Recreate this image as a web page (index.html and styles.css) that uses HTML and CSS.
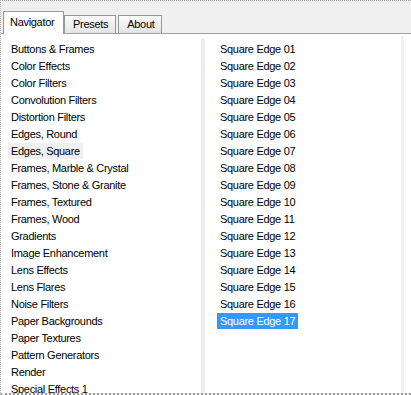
FILE: index.html
```html
<!DOCTYPE html>
<html lang="en">
  <head>
    <meta charset="UTF-8" />
    <title>Navigator</title>
    <link rel="stylesheet" href="styles.css">
  </head>
  <body>
    <div class="window">
      <div class="tabbar">
        <div class="tab active">Navigator</div>
        <div class="tab">Presets</div>
        <div class="tab">About</div>
      </div>
      <div class="panel">
        <ul class="list categories">
          <li>Buttons &amp; Frames</li>
          <li>Color Effects</li>
          <li>Color Filters</li>
          <li>Convolution Filters</li>
          <li>Distortion Filters</li>
          <li>Edges, Round</li>
          <li class="current">Edges, Square</li>
          <li>Frames, Marble &amp; Crystal</li>
          <li>Frames, Stone &amp; Granite</li>
          <li>Frames, Textured</li>
          <li>Frames, Wood</li>
          <li>Gradients</li>
          <li>Image Enhancement</li>
          <li>Lens Effects</li>
          <li>Lens Flares</li>
          <li>Noise Filters</li>
          <li>Paper Backgrounds</li>
          <li>Paper Textures</li>
          <li>Pattern Generators</li>
          <li>Render</li>
          <li>Special Effects 1</li>
        </ul>
        <div class="splitter"></div>
        <ul class="list presets">
          <li>Square Edge 01</li>
          <li>Square Edge 02</li>
          <li>Square Edge 03</li>
          <li>Square Edge 04</li>
          <li>Square Edge 05</li>
          <li>Square Edge 06</li>
          <li>Square Edge 07</li>
          <li>Square Edge 08</li>
          <li>Square Edge 09</li>
          <li>Square Edge 10</li>
          <li>Square Edge 11</li>
          <li>Square Edge 12</li>
          <li>Square Edge 13</li>
          <li>Square Edge 14</li>
          <li>Square Edge 15</li>
          <li>Square Edge 16</li>
          <li class="selected">Square Edge 17</li>
        </ul>
        <div class="edge"></div>
      </div>
    </div>
  </body>
</html>
```

FILE: styles.css
```css
html,
body {
  margin: 0;
  padding: 0;
  height: 100%;
}

body {
  font-family: "Liberation Sans", Arial, sans-serif;
  font-size: 11px;
  letter-spacing: -0.3px;
  color: #000;
  background-color: #f0f0f0;
  overflow: hidden;
}

.window {
  box-sizing: border-box;
  height: 395px;
  display: flex;
  flex-flow: column;
  border-top: 1px dotted #9a9a9a;
  border-bottom: 2px dotted #9a9a9a;
  border-left: 1px dotted #b4b4b4;
}

.tabbar {
  height: 32px;
  display: flex;
  align-items: flex-end;
  padding-left: 2px;
  border-bottom: 1px solid #a0a0a0;
  flex-shrink: 0;
}

.tab {
  box-sizing: border-box;
  height: 18px;
  line-height: 17px;
  padding: 0 7px 0 8px;
  margin-right: 2px;
  border: 1px solid #919b9c;
  border-bottom: none;
  background: linear-gradient(#fcfcfc, #e4e4e4);
}

.tab.active {
  height: 23px;
  line-height: 20px;
  padding: 0 6px 0 6px;
  width: 61px;
  margin-right: 0;
  margin-bottom: -1px;
  background: #fff;
}

.panel {
  flex: 1;
  display: flex;
  background-color: #fff;
  min-height: 0;
}

.list {
  margin: 0;
  padding: 7px 0 0 0;
  list-style: none;
  overflow: hidden;
}

.list li {
  width: fit-content;
  height: 16px;
  line-height: 16px;
  margin-bottom: 1px;
  padding: 0 3px;
  white-space: nowrap;
}

.categories {
  width: 200px;
  padding-left: 7px;
  box-sizing: border-box;
  flex-shrink: 0;
}

.categories li.current {
  background-color: #f0f0f0;
}

.splitter {
  width: 4px;
  margin-top: 5px;
  background-color: #ececec;
  flex-shrink: 0;
}

.presets {
  flex: 1;
  padding-left: 12px;
}

.presets li.selected {
  background-color: #3399ff;
  color: #fff;
}

.edge {
  width: 3px;
  margin: 2px 7px 0 0;
  background-color: #f0f0f0;
  flex-shrink: 0;
}
```
